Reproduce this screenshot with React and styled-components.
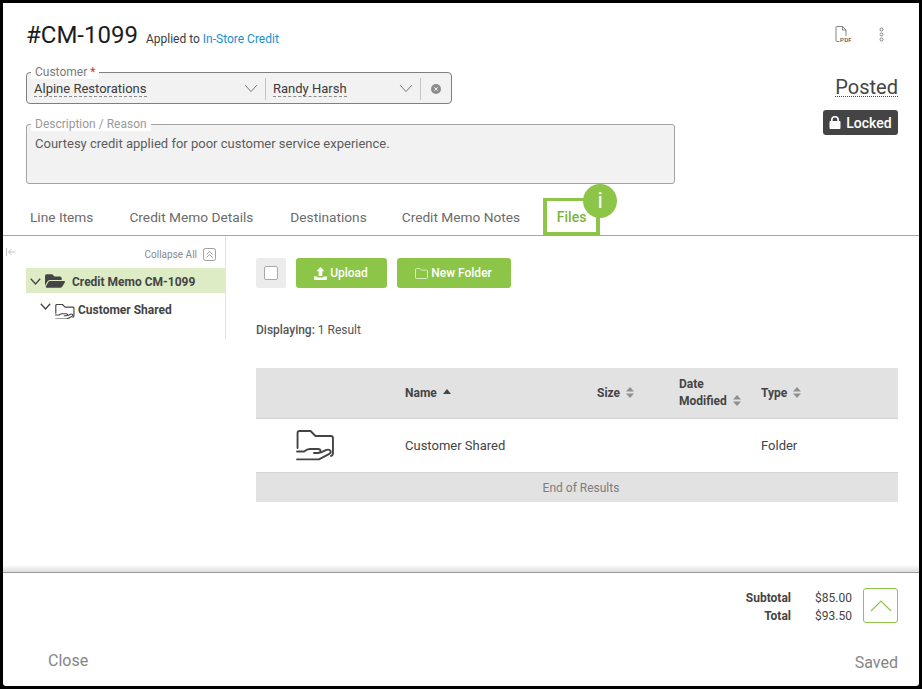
import React from "react";
import styled, { createGlobalStyle } from "styled-components";
import { FaFolderOpen } from "react-icons/fa";

const Global = createGlobalStyle`
  html, body { margin: 0; padding: 0; background: #000; }
  * { box-sizing: border-box; }
  body { font-family: Roboto, "Liberation Sans", sans-serif; }
`;

const Page = styled.div`
  width: 922px; height: 689px; background: #000; padding: 3px;
`;
const Frame = styled.div`
  width: 916px; height: 683px; background: #fff; display: flex; flex-direction: column;
  border-radius: 0 0 3px 3px; overflow: hidden;
`;
const Top = styled.header`
  display: flex; justify-content: space-between; padding: 17px 21px 0 23px; height: 195px; flex: none;
`;
const TopLeft = styled.div`display: flex; flex-direction: column;`;
const TitleRow = styled.div`
  display: flex; align-items: baseline; gap: 8px; height: 30px; line-height: 30px;
`;
const Title = styled.h1`
  margin: 0; font-size: 24px; font-weight: 400; color: #1c1c1c; letter-spacing: 0;
`;
const Applied = styled.span`font-size: 12px; color: #3b3b3b;`;
const Link = styled.a`color: #1a8fd1; text-decoration: none;`;

const Field = styled.div`
  position: relative; background: #f2f2f2; border: 1px solid #8c8c8c; border-radius: 3px;
`;
const CustomerField = styled(Field)`
  width: 426px; height: 32px; margin-top: 22px; display: flex; align-items: center; padding-top: 2px;
  border-color: #808080; border-radius: 4px;
`;
const DescField = styled(Field)`
  width: 649px; height: 60px; margin-top: 20px; border-color: #a3a3a3;
  padding: 11px 8px 0; font-size: 13px; line-height: 16px; color: #5c5c5c;
`;
const FieldLabel = styled.label`
  position: absolute; top: -7px; left: 4px; background: #fff; padding: 0 4px;
  height: 13px; line-height: 13px; font-size: 12px; color: ${p => p.$muted ? "#9a9a9a" : "#7b7b7b"};
`;
const Req = styled.span`color: #d0343c;`;
const Select = styled.div`
  display: flex; align-items: center; justify-content: space-between;
  width: ${p => p.$w}px; height: 22px; padding: 0 7px;
  border-right: 1px solid #c4c4c4;
`;
const SelectText = styled.span`
  font-size: 13px; line-height: 15px; color: #3a3a3a; border-bottom: 1px dashed #8a8a8a; height: 16px;
`;
const ClearBox = styled.div`display: flex; flex: 1; justify-content: center; align-items: center; padding-right: 1px;`;

const TopRight = styled.div`display: flex; flex-direction: column; align-items: flex-end;`;
const Actions = styled.div`display: flex; align-items: center; gap: 27px; height: 30px; margin-top: -1px; padding-right: 14px;`;
const Status = styled.div`
  margin-top: 28px; font-size: 20px; line-height: 20px; height: 20px; color: #444;
  border-bottom: 1px dotted #444;
`;
const LockedBadge = styled.div`
  margin-top: 13px; height: 25px; width: 75px; background: #444; border-radius: 3px; color: #fff;
  display: flex; align-items: center; justify-content: center; gap: 5px; font-size: 14px; font-weight: 500;
`;

const Tabs = styled.nav`
  display: flex; height: 38px; flex: none; border-bottom: 1px solid #a6a6a6; padding-left: 27px; align-items: flex-end;
`;
const Tab = styled.div`
  position: relative; font-size: 13.7px; color: #6b6b6b; height: 37px; line-height: 38px;
  margin-right: ${p => p.$mr}px; 
`;
const ActiveTab = styled(Tab)`
  width: 57px; margin-left: -12px; border: 4px solid #8dc549; border-bottom-width: 3px; border-top-width: 3px;
  color: #7bb33c; text-align: center; line-height: 33px; font-size: 14px; font-weight: 500;
`;
const Hint = styled.span`
  position: absolute; top: -17px; right: -21px; width: 34px; height: 34px; border-radius: 50%;
  background: #8dc549; color: #fff; font-size: 22px; font-weight: 400; line-height: 34px; text-align: center;
`;

const Body = styled.div`display: flex; flex: 1; min-height: 0;`;
const Side = styled.aside`
  width: 223px; height: 103px; border-right: 1px solid #e2e2e2; padding-top: 10px; position: relative;
`;
const CollapseIcon = styled.span`position: absolute; left: 3px; top: 12px; display: flex;`;
const CollapseRow = styled.div`
  display: flex; justify-content: flex-end; align-items: center; gap: 6px; height: 16px;
  padding-right: 9px; font-size: 10px; color: #8a8a8a;
`;
const TreeRow = styled.div`
  display: flex; align-items: center; height: 25px; margin-left: 23px; font-size: 12px; font-weight: 700; color: #444;
  background: ${p => p.$active ? "#deecc5" : "transparent"};
  padding-left: ${p => p.$indent}px;
`;
const RootRow = styled(TreeRow)`margin-top: 6px; padding-top: 2px;`;
const ChildRow = styled(TreeRow)`margin-top: 2px; height: 29px;`;
const ChildChevron = styled.span`display: flex; margin-top: -5px;`;
const RootFolder = styled(FaFolderOpen)`margin: -2px 7px 0 4px;`;
const ChildFolder = styled.span`margin: 4px 3px 0 4px; display: flex;`;
const Main = styled.main`flex: 1; padding: 22px 21px 0 30px;`;
const Toolbar = styled.div`display: flex; gap: 10px; align-items: center;`;
const CheckWrap = styled.div`
  width: 30px; height: 30px; background: #ececec; border-radius: 2px;
  display: flex; align-items: center; justify-content: center;
`;
const Check = styled.span`
  width: 14px; height: 14px; background: #fff; border: 1px solid #a9a9a9; border-radius: 2px;
`;
const Btn = styled.button`
  height: 30px; width: ${p => p.$w}px; background: #8dc549; border: 0; border-radius: 3px; color: #fff;
  font: 500 12px Roboto, sans-serif; display: flex; align-items: center; justify-content: center; gap: 3px; padding: 0 1px 0 0;
`;
const Displaying = styled.div`
  margin-top: 34px; height: 16px; line-height: 16px; font-size: 12px; color: #555;
  b { font-weight: 500; }
`;
const Table = styled.div`margin-top: 30px; width: 642px;`;
const Grid = styled.div`
  display: grid; grid-template-columns: 149px 192px 82px 82px 1fr; align-items: center;
`;
const Head = styled(Grid)`
  height: 51px; background: #e2e2e2; border-bottom: 1px solid #d0d0d0;
  font-size: 12px; font-weight: 700; color: #444; line-height: 17px;
`;
const Row = styled(Grid)`
  height: 54px; border-bottom: 1px solid #d4d4d4; font-size: 13px; color: #444;
`;
const IconCell = styled.div`display: flex; justify-content: flex-end; padding-right: 70px;`;
const End = styled.div`
  height: 29px; background: #e2e2e2; text-align: center; line-height: 31px; font-size: 12px; color: #7d7d7d;
  padding-left: 8px;
`;
const Sort = styled.svg`margin-left: 6px; vertical-align: -1px;`;
const SortUp = styled(Sort)`vertical-align: 3px;`;

const Foot = styled.footer`
  height: 114px; flex: none; border-top: 1px solid #9c9c9c; position: relative; padding: 15px 21px 0 0;
  display: flex; flex-direction: column;
  &::before {
    content: ""; position: absolute; left: 0; right: 0; top: -8px; height: 7px;
    background: linear-gradient(to bottom, #fff, #dcdcdc);
  }
`;
const TotalsRow = styled.div`display: flex; justify-content: flex-end; gap: 11px;`;
const Totals = styled.div`
  display: grid; grid-template-columns: auto 61px; row-gap: 1px; font-size: 12px; line-height: 16.5px;
  padding-top: 2px; color: #444; text-align: right; align-content: start;
  b { font-weight: 700; }
`;
const Expand = styled.div`
  width: 35px; height: 35px; border: 1px solid #8dc549; border-radius: 3px; display: flex; align-items: center; justify-content: center;
`;
const FootActions = styled.div`
  display: flex; justify-content: space-between; padding-left: 45px; margin-top: 27px;
  font-size: 16px; line-height: 20px; color: #858585;
`;
const Saved = styled.span`margin-top: 2px;`;

const Chevron = ({ size = 14, color = "#444", w = 1.6 }) => (
  <svg width={size} height={size * 0.65} viewBox="0 0 14 9" fill="none" stroke={color} strokeWidth={w}>
    <path d="M1 1l6 6.5L13 1" />
  </svg>
);
const SortBoth = () => (
  <Sort width="8" height="11" viewBox="0 0 8 11" fill="#8f8f8f">
    <path d="M4 0l4 4.4H0zM0 6.6h8L4 11z" />
  </Sort>
);
const HandFolder = ({ size = 39, color = "#444", sw = 1.9 }) => (
  <svg width={size} height={size * 0.78} viewBox="0 0 39 30.500" fill="none" stroke={color} strokeWidth={sw} strokeLinecap="round" strokeLinejoin="round">
    <path d="M1.500 18V3q0-2 2-2h11l5 5h15.500q2 0 2 2V23q0 2.500-2 3" />
    <path d="M1 21.500h7q3-2.500 6-2.500h8q2.500 0 2.500 2t-2.500 2h-4" />
    <path d="M25 22.500l5.500-2.500q3-1 4 1t-2 3.500L23 29.500H1" />
  </svg>
);

export default function App() {
  return (
    <Page>
      <Global />
      <Frame>
        <Top>
          <TopLeft>
            <TitleRow>
              <Title>#CM-1099</Title>
              <Applied>Applied to <Link>In-Store Credit</Link></Applied>
            </TitleRow>
            <CustomerField>
              <FieldLabel>Customer <Req>*</Req></FieldLabel>
              <Select $w={239}>
                <SelectText>Alpine Restorations</SelectText>
                <Chevron color="#777" w={1} />
              </Select>
              <Select $w={155}>
                <SelectText>Randy Harsh</SelectText>
                <Chevron color="#777" w={1} />
              </Select>
              <ClearBox>
                <svg width="10" height="10" viewBox="0 0 10 10">
                  <circle cx="5" cy="5" r="5" fill="#8c8c8c" />
                  <path d="M3.300 3.300l3.400 3.400M6.700 3.300l-3.400 3.400" stroke="#f2f2f2" strokeWidth="1" />
                </svg>
              </ClearBox>
            </CustomerField>
            <DescField>
              <FieldLabel $muted>Description / Reason</FieldLabel>
              Courtesy credit applied for poor customer service experience.
            </DescField>
          </TopLeft>
          <TopRight>
            <Actions>
              <svg width="17" height="17" viewBox="0 0 17 17" fill="none" stroke="#666" strokeWidth="0.8">
                <path d="M4.500 15.500H2q-1 0-1-1V1.500q0-1 1-1h5.500L11 4v6" />
                <path d="M7.500 .5V4H11" />
                <text x="5" y="16" fontSize="6" fontFamily="Roboto" fontWeight="500" fill="#555" stroke="none" letterSpacing="0.300">PDF</text>
              </svg>
              <svg width="5" height="15" viewBox="0 0 5 15" fill="none" stroke="#777" strokeWidth="0.9">
                <circle cx="2.500" cy="2.500" r="1.500" /><circle cx="2.500" cy="7.500" r="1.500" /><circle cx="2.500" cy="12.500" r="1.500" />
              </svg>
            </Actions>
            <Status>Posted</Status>
            <LockedBadge>
              <svg width="12" height="13" viewBox="0 0 12 13" fill="#fff">
                <path d="M2 5V3.800a4 3.800 0 0 1 8 0V5h.5q1 0 1 1v6q0 1-1 1h-9q-1 0-1-1V6q0-1 1-1zm1.700 0h4.600V3.800a2.300 2.200 0 0 0-4.600 0z" />
              </svg>
              Locked
            </LockedBadge>
          </TopRight>
        </Top>
        <Tabs>
          <Tab $mr={36}>Line Items</Tab>
          <Tab $mr={37}>Credit Memo Details</Tab>
          <Tab $mr={35}>Destinations</Tab>
          <Tab $mr={35}>Credit Memo Notes</Tab>
          <ActiveTab>Files<Hint>i</Hint></ActiveTab>
        </Tabs>
        <Body>
          <Side>
            <CollapseIcon>
              <svg width="10" height="8" viewBox="0 0 10 8" fill="none" stroke="#bdbdbd" strokeWidth="0.9">
                <path d="M.5 0v8M9.500 4H2.500M5.500 1L2.500 4l3 3" />
              </svg>
            </CollapseIcon>
            <CollapseRow>
              Collapse All
              <svg width="13" height="13" viewBox="0 0 13 13" fill="none" stroke="#888" strokeWidth="0.8">
                <rect x=".5" y=".5" width="12" height="12" rx="2" />
                <path d="M3.500 6.500l3-3 3 3M3.500 9.500l3-3 3 3" />
              </svg>
            </CollapseRow>
            <RootRow $active $indent={4}>
              <Chevron size={11} w={1.7} />
              <RootFolder size={20} color="#444" />
              Credit Memo CM-1099
            </RootRow>
            <ChildRow $indent={14}>
              <ChildChevron><Chevron size={11} w={1.7} /></ChildChevron>
              <ChildFolder><HandFolder size={20} sw={2.2} /></ChildFolder>
              Customer Shared
            </ChildRow>
          </Side>
          <Main>
            <Toolbar>
              <CheckWrap><Check /></CheckWrap>
              <Btn $w={91}>
                <svg width="13" height="13" viewBox="0 0 13 13" fill="#fff">
                  <path d="M6.500 0l4 4.300H8.300V9H4.700V4.300H2.500z" />
                  <path d="M0 9.500h3.500v1h6v-1H13V12q0 1-1 1H1q-1 0-1-1z" />
                </svg>
                Upload
              </Btn>
              <Btn $w={114}>
                <svg width="13" height="11" viewBox="0 0 13 11" fill="none" stroke="#e2f0cf" strokeWidth="0.9">
                  <path d="M1.500.5h3.300l1.500 1.600h5.200q1 0 1 1v6.400q0 1-1 1H1.500q-1 0-1-1v-8q0-1 1-1z" />
                </svg>
                New Folder
              </Btn>
            </Toolbar>
            <Displaying><b>Displaying:</b> 1 Result</Displaying>
            <Table>
              <Head>
                <span />
                <div>
                  Name
                  <SortUp width="8" height="5" viewBox="0 0 8 5" fill="#444">
                    <path d="M4 0l4 5H0z" />
                  </SortUp>
                </div>
                <div>Size<SortBoth /></div>
                <div>Date<br />Modified<SortBoth /></div>
                <div>Type<SortBoth /></div>
              </Head>
              <Row>
                <IconCell><HandFolder /></IconCell>
                <div>Customer Shared</div>
                <div />
                <div />
                <div>Folder</div>
              </Row>
              <End>End of Results</End>
            </Table>
          </Main>
        </Body>
        <Foot>
          <TotalsRow>
            <Totals>
              <b>Subtotal</b><span>$85.00</span>
              <b>Total</b><span>$93.50</span>
            </Totals>
            <Expand>
              <svg width="22" height="12" viewBox="0 0 22 12" fill="none" stroke="#8dc549" strokeWidth="1.200">
                <path d="M1 11L11 1l10 10" />
              </svg>
            </Expand>
          </TotalsRow>
          <FootActions>
            <span>Close</span>
            <Saved>Saved</Saved>
          </FootActions>
        </Foot>
      </Frame>
    </Page>
  );
}
